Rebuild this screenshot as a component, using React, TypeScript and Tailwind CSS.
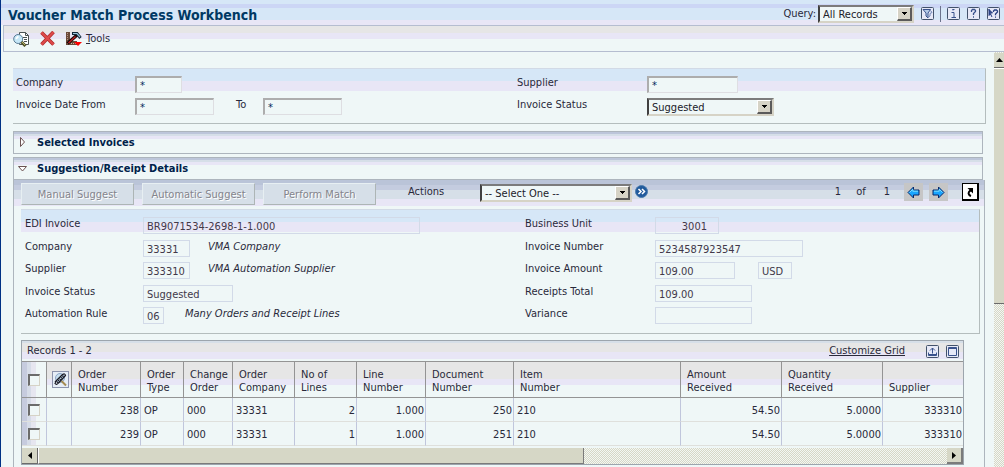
import type { ComponentProps, ReactNode } from 'react';

const selectBase =
  'w-full appearance-none rounded-none border-2 border-t-[#7b7b7b] border-l-[#404040] border-r-[#d6d3c6] border-b-[#d6d3c6] bg-[#eff7f7] pt-px pl-[3px] text-[11px] leading-[14px] text-[#212129]';

function Select({ id, label, options, className }: { id: string; label?: string; options: string[]; className: string }) {
  return (
    <span className={`relative inline-block h-[18px] shrink-0 ${className}`}>
      <select id={id} aria-label={label} className={`${selectBase} block h-[18px]`}>
        {options.map((o) => (
          <option key={o}>{o}</option>
        ))}
      </select>
      <span className="pointer-events-none absolute top-[2px] right-[2px] flex h-[14px] w-[15px] items-center justify-center border-t border-l border-r-2 border-b-2 border-t-white border-l-white border-r-[#5a5a5a] border-b-[#5a5a5a] bg-[#d6d3c6]">
        <svg width="5" height="3" viewBox="0 0 5 3" shapeRendering="crispEdges">
          <path d="M0 0h5v1h-1v1h-1v1h-1v-1h-1v-1h-1z" />
        </svg>
      </span>
    </span>
  );
}

function Field({ className = '', ...rest }: ComponentProps<'input'>) {
  return (
    <input
      className={`h-[17px] min-w-0 rounded-none border border-t-2 border-l-2 border-t-[#adadad] border-l-[#adadad] border-r-[#dedee2] border-b-[#dedee2] bg-[#eff7f7] px-[3px] text-[11px] leading-3 text-[#00295a] ${className}`}
      {...rest}
    />
  );
}

function ReadOnly({ className = '', ...rest }: ComponentProps<'input'>) {
  return (
    <input
      readOnly
      className={`h-[17px] min-w-0 rounded-none border border-[#d2dae8] px-[3px] pt-px text-[11px] leading-3 text-[#42394a] ${className}`}
      {...rest}
    />
  );
}

function Row({ id, label, labelWidth, children }: { id: string; label: string; labelWidth: string; children: ReactNode }) {
  return (
    <div className="flex items-start">
      <label htmlFor={id} className={`shrink-0 leading-[14px] ${labelWidth}`}>
        {label}
      </label>
      {children}
    </div>
  );
}

function Section({ title, open }: { title: string; open?: boolean }) {
  return (
    <button
      type="button"
      aria-expanded={!!open}
      className="mr-[3px] flex h-[23px] items-center border border-[#adb5bd] bg-[linear-gradient(#bdc6da_0_2px,#d6dfe8_2px_4px,#e8e6f6_4px_7px,#eff7f7_7px)] pl-1 text-left text-[11px] font-bold text-[#00214a]"
    >
      <span className="flex w-[19px] justify-start">
        {open ? (
          <svg width="9" height="6" viewBox="0 0 9 6">
            <path d="M.5.5h8l-4 4.500z" fill="#fff" stroke="#6b5252" />
          </svg>
        ) : (
          <svg width="9" height="10" viewBox="0 0 9 10" className="mb-px">
            <path d="M2.500.5v9l4-4.500z" fill="#fff" stroke="#6b5252" />
          </svg>
        )}
      </span>
      <span className="pt-px">{title}</span>
    </button>
  );
}

function HeaderIcon({ label, children }: { label: string; children: ReactNode }) {
  return (
    <button type="button" aria-label={label} className="block size-[13px]">
      <svg width="13" height="13" viewBox="0 0 13 13" fill="none" stroke="#39528c">
        <rect x=".5" y=".5" width="12" height="12" rx="1" fill="#e6e9f7" stroke="#42526b" />
        {children}
      </svg>
    </button>
  );
}

function PagerArrow({ label, flip }: { label: string; flip?: boolean }) {
  return (
    <button type="button" aria-label={label} className="flex h-[18px] w-[19px] items-center justify-center bg-[#c6c6c6]">
      <svg width="13" height="13" viewBox="0 0 13 13" className={flip ? '-scale-x-100' : ''}>
        <path d="M1 6.500 6.500 1v3H12v5H6.500v3z" fill="#18a5ff" stroke="#08296b" />
        <path d="M2.500 6.500 5.800 3.200V5.200H11" fill="none" stroke="#7be0ff" />
      </svg>
    </button>
  );
}

const columns: { title: string[]; width: string; right?: boolean }[] = [
  { title: ['Order', 'Number'], width: 'w-[69px]', right: true },
  { title: ['Order', 'Type'], width: 'w-[43px]' },
  { title: ['Change', 'Order'], width: 'w-[49px]' },
  { title: ['Order', 'Company'], width: 'w-[62px]' },
  { title: ['No of', 'Lines'], width: 'w-[62px]', right: true },
  { title: ['Line', 'Number'], width: 'w-[69px]', right: true },
  { title: ['Document', 'Number'], width: 'w-[88px]', right: true },
  { title: ['Item', 'Number'], width: '' },
  { title: ['Amount', 'Received'], width: 'w-[101px]', right: true },
  { title: ['Quantity', 'Received'], width: 'w-[101px]', right: true },
  { title: ['Supplier'], width: 'w-[80px]', right: true },
];

const rows = [
  ['238', 'OP', '000', '33331', '2', '1.000', '250', '210', '54.50', '5.0000', '333310'],
  ['239', 'OP', '000', '33331', '1', '1.000', '251', '210', '54.50', '5.0000', '333310'],
];

const checkbox =
  'block size-3 appearance-none border-t-2 border-l-2 border-r border-b border-t-[#6b6b6b] border-l-[#6b6b6b] border-r-[#d6d3c6] border-b-[#d6d3c6] bg-[#eff7f7]';
const checkCell = 'pl-[6px] bg-[linear-gradient(90deg,#c6cbde_0_5px,#d6dce8_5px_9px,#e6e6f0_9px_14px,#eff7f7_14px)]!';
const dither = 'bg-[repeating-conic-gradient(#d6d7c6_0_25%,#f3f7f3_0_50%)] bg-[length:2px_2px]';

export default function App() {
  return (
    <div className="flex h-screen min-h-[467px] flex-col overflow-hidden border-l border-[#003184] bg-[#eff7f7] font-['DejaVu_Sans_Condensed','DejaVu_Sans',sans-serif] text-[11px] text-[#29293a]">
      <header className="flex h-[25px] shrink-0 items-center bg-[linear-gradient(#d6e7f7_0_4px,#ccd6f5_4px_8px,#d6e7f7_8px_20px,#e8e6f6_20px)] pr-1 pl-[7px]">
        <h1 className="mt-1 grow text-[14px] leading-4 font-bold text-[#003963]">Voucher Match Process Workbench</h1>
        <label htmlFor="query" className="mt-1 mr-[2px]">
          Query:
        </label>
        <Select id="query" options={['All Records']} className="mt-[2px] w-24" />
        <div className="mt-[2px] ml-[7px] flex items-center gap-[7px]">
          <HeaderIcon label="Filter">
            <path d="M2 2.500h7.500L7 6v5L5 9V6z" fill="#b5cbe8" />
            <path d="M9.500 3.500 11 5.500 9 6.500V9L7.500 10" stroke="#6b84b5" />
          </HeaderIcon>
          <span className="-mx-px h-4 w-px bg-[#6b738c]" />
          <HeaderIcon label="About">
            <path d="M5.500 2.500h2M6 2v1.500M4.500 5.500h2.500V10M4.500 10.500h4.500" />
          </HeaderIcon>
          <HeaderIcon label="Help">
            <path d="M4.500 5V3.500L5.500 2.500h2L8.500 3.500v1L6.500 6.500V8M6 10h1" strokeWidth="1.300" />
          </HeaderIcon>
          <HeaderIcon label="Item help">
            <path d="M2 2v6.500L3.500 7 5 10M2 2.500 5.500 6H3z" fill="#294284" stroke="#294284" />
            <path d="M6.500 5V4l1-1h2l1 1v1L8.500 7v1.200M8 10.200h1" stroke="#294284" strokeWidth="1.300" />
          </HeaderIcon>
        </div>
      </header>

      <nav className="ml-[2px] flex h-[27px] shrink-0 items-center border border-r-0 border-[#b5bdd0] bg-[linear-gradient(#e6e6e6_0_7px,#e8e6f6_7px_13px,#eff7f7_13px)] pl-[9px]">
        <button type="button" aria-label="Find" className="mr-[10px]">
          <svg width="17" height="16" viewBox="0 0 17 16" fill="none">
            <path d="M6.500 1.500h6l3 3v9h-9z" fill="#fff" stroke="#4a5252" />
            <path d="M12.500 1.500v3h3" stroke="#4a5252" />
            <path d="M10 6.500h4M11 8.500h3M11 10.500h3" stroke="#4a5252" />
            <circle cx="5.200" cy="8" r="4.500" fill="#c6e7f7" stroke="#5a7b94" />
            <path d="M3 7.800 5.300 5.300" stroke="#fff" strokeWidth="1.700" />
            <path d="m8.500 11 4 4" stroke="#525229" strokeWidth="3" />
            <path d="m9 11 3 3" stroke="#b5b56b" />
          </svg>
        </button>
        <button type="button" aria-label="Delete" className="mr-[11px]">
          <svg width="15" height="15" viewBox="0 0 15 15" fill="none">
            <path d="M1.500 1.500 13.500 13.500M13.500 1 1.500 13.500" stroke="#ad2929" strokeWidth="3.600" />
            <path d="M1.500 1.500 13.500 13.500M13.500 1 1.500 13.500" stroke="#de4a4a" strokeWidth="2.200" />
          </svg>
        </button>
        <button type="button" className="flex items-center gap-1">
          <svg width="16" height="16" viewBox="0 0 16 16" fill="none">
            <path d="M0 1h4v9h7v4H0z" fill="#6b4a39" />
            <path d="M1.500 2v11" stroke="#b59484" strokeDasharray="1 1" />
            <path d="M3 12.500h8" stroke="#d6b59c" strokeDasharray="1 1" />
            <path d="M1.500 12.500 11 4" stroke="#180808" strokeWidth="3.200" />
            <path d="M2.500 12 9.500 5.500" stroke="#c62121" strokeWidth="1.200" />
            <path d="M6 2.500h5L14.500 7" stroke="#102939" strokeWidth="3" />
            <path d="M7 2.500h4L14 6" stroke="#9cc6de" strokeWidth="1.200" />
            <path d="M8 11h8l-4 4z" fill="#f00" />
          </svg>
          <span className="pt-[2px]">
            <u>T</u>ools
          </span>
        </button>
      </nav>

      <div className="flex min-h-0 grow">
        <main className="flex min-w-0 grow flex-col overflow-hidden pt-4 pr-2 pl-3">
          <section
            aria-label="Filters"
            className="flex h-14 shrink-0 border-t border-r border-b border-[#b4bdbd] border-t-[#d2dae6] bg-[linear-gradient(#d6e7f7_0_12px,#e8e6f6_12px_22px,#eff7f7_22px)] pt-[7px] pl-[3px]"
          >
            <div className="flex w-[501px] flex-col gap-[5px]">
              <Row id="company" label="Company" labelWidth="w-[119px]">
                <Field id="company" defaultValue="*" className="w-[47px]" />
              </Row>
              <Row id="from" label="Invoice Date From" labelWidth="w-[119px]">
                <Field id="from" defaultValue="*" className="w-[79px]" />
                <label htmlFor="to" className="ml-[22px] w-[27px] leading-[14px]">
                  To
                </label>
                <Field id="to" defaultValue="*" className="w-[79px]" />
              </Row>
            </div>
            <div className="flex flex-col gap-[5px]">
              <Row id="supplier" label="Supplier" labelWidth="w-[130px]">
                <Field id="supplier" defaultValue="*" className="w-[91px]" />
              </Row>
              <Row id="status" label="Invoice Status" labelWidth="w-[130px]">
                <Select id="status" options={['Suggested']} className="w-[127px]" />
              </Row>
            </div>
          </section>

          <div className="mt-[7px] flex shrink-0 flex-col gap-[3px]">
            <Section title="Selected Invoices" />
            <Section title="Suggestion/Receipt Details" open />
          </div>

          <section
            aria-label="Suggestion details"
            className="mr-px flex grow flex-col border-r border-l border-[#adb5bd] bg-[linear-gradient(#bac4d8_0_5px,#c4ccdf_5px_10px,#d6dfe8_10px_19px,#e8e6f6_19px_26px,#eff7f7_26px)] pt-[3px] pr-1 pl-[7px]"
          >
            <div className="flex h-[22px] shrink-0 items-start">
              <div className="flex gap-2">
                {['Manual Suggest', 'Automatic Suggest', 'Perform Match'].map((t) => (
                  <button
                    key={t}
                    type="button"
                    disabled
                    className="h-[22px] w-[113px] border border-t-[#e7eff2] border-r-[#adb5b5] border-b-[#adb5b5] border-l-[#e7eff2] bg-[#d6dfe8] pt-[2px] text-[#84848c] [text-shadow:1px_1px_0_#fff]"
                  >
                    {t}
                  </button>
                ))}
              </div>
              <label htmlFor="actions" className="mt-[2px] ml-[32px] w-[72px] leading-[14px]">
                Actions
              </label>
              <Select id="actions" options={['-- Select One --']} className="mt-px w-[152px]" />
              <button type="button" aria-label="Go" className="mt-[2px] ml-[3px]">
                <svg width="13" height="13" viewBox="0 0 13 13" fill="none">
                  <circle cx="6.500" cy="6.500" r="6" fill="#215a9c" stroke="#4a7bad" />
                  <path d="m3.500 4 2.500 2.500L3.500 9M7 4l2.500 2.500L7 9" stroke="#fff" strokeWidth="1.500" />
                </svg>
              </button>
              <div className="mr-px ml-auto flex items-start">
                <span className="mt-[2px] flex gap-[15px] pr-[14px] leading-[14px]">
                  <span>1</span>
                  <span>of</span>
                  <span className="pl-[3px]">1</span>
                </span>
                <div className="mr-[14px] flex gap-[6px]">
                  <PagerArrow label="Previous" />
                  <PagerArrow label="Next" flip />
                </div>
                <button
                  type="button"
                  aria-label="Maximize"
                  className="flex h-[18px] w-[17px] items-center justify-center border border-r-2 border-b-2 border-black bg-white"
                >
                  <svg width="9" height="10" viewBox="0 0 9 10" fill="none">
                    <path d="M1.500 1H7v5.500z" fill="#000" />
                    <path d="M5.500 3Q1.500 5 3 7.500 3.500 8.500 5 9" stroke="#000" strokeWidth="2" />
                  </svg>
                </button>
              </div>
            </div>

            <div className="mt-1 flex h-[125px] shrink-0 border-t border-r border-b border-[#b4bdbd] border-t-[#d2dae6] bg-[linear-gradient(#d6e7f7_0_12px,#e8e6f6_12px_22px,#eff7f7_22px)] pt-[7px] pl-1">
              <div className="grid w-[500px] grid-rows-[23px_22px_23px_22px_17px]">
                <Row id="edi" label="EDI Invoice" labelWidth="w-[118px]">
                  <ReadOnly id="edi" defaultValue="BR9071534-2698-1-1.000" className="w-[277px]" />
                </Row>
                <Row id="co" label="Company" labelWidth="w-[118px]">
                  <ReadOnly id="co" defaultValue="33331" className="w-[47px]" />
                  <i className="ml-[18px] leading-[14px]">VMA Company</i>
                </Row>
                <Row id="sup" label="Supplier" labelWidth="w-[118px]">
                  <ReadOnly id="sup" defaultValue="333310" className="w-[47px]" />
                  <i className="ml-[18px] leading-[14px]">VMA Automation Supplier</i>
                </Row>
                <Row id="st" label="Invoice Status" labelWidth="w-[118px]">
                  <ReadOnly id="st" defaultValue="Suggested" className="w-[90px]" />
                </Row>
                <Row id="rule" label="Automation Rule" labelWidth="w-[118px]">
                  <ReadOnly id="rule" defaultValue="06" className="w-[21px]" />
                  <i className="ml-[21px] leading-[14px]">Many Orders and Receipt Lines</i>
                </Row>
              </div>
              <div className="grid grid-rows-[23px_22px_23px_22px_17px]">
                <Row id="bu" label="Business Unit" labelWidth="w-[130px]">
                  <ReadOnly id="bu" defaultValue="3001" className="w-16 pr-[11px] text-right" />
                </Row>
                <Row id="num" label="Invoice Number" labelWidth="w-[130px]">
                  <ReadOnly id="num" defaultValue="5234587923547" className="w-[148px]" />
                </Row>
                <Row id="amt" label="Invoice Amount" labelWidth="w-[130px]">
                  <ReadOnly id="amt" defaultValue="109.00" className="w-20" />
                  <ReadOnly aria-label="Currency" defaultValue="USD" className="ml-[23px] w-[34px]" />
                </Row>
                <Row id="tot" label="Receipts Total" labelWidth="w-[130px]">
                  <ReadOnly id="tot" defaultValue="109.00" className="w-[97px]" />
                </Row>
                <Row id="var" label="Variance" labelWidth="w-[130px]">
                  <ReadOnly id="var" defaultValue="" className="w-[97px]" />
                </Row>
              </div>
            </div>

            <div className="mt-[6px] mr-[16px] shrink-0 border border-[#9ca5ad]">
              <div className="flex h-5 items-center bg-[linear-gradient(#d6dfe8_0_2px,#e6e6e6_2px_11px,#e8e6f6_11px_18px,#eff7f7_18px)] pr-1 pl-[5px]">
                <span className="grow pt-px">Records 1 - 2</span>
                <a href="#customize" className="mr-[21px] pt-px underline">
                  Customize Grid
                </a>
                <div className="flex gap-[7px]">
                  <HeaderIcon label="Export">
                    <path d="M6.500 8.500V3M4 5.500l2.500-2.500L9 5.500" />
                    <path d="M2.500 7.500v3h8v-3M3 9.500h7" />
                  </HeaderIcon>
                  <HeaderIcon label="Maximize grid">
                    <path d="M2.500 2.500h8v8h-8zM2.500 3.500h8" />
                  </HeaderIcon>
                </div>
              </div>
              <table className="w-full table-fixed border-separate border-spacing-0">
                <thead>
                  <tr className="h-[37px] *:border-t *:border-b *:border-[#949494] *:bg-[linear-gradient(#e6e6e6_0_17px,#e8e6f6_17px_23px,#eff7f7_23px)]">
                    <th className={`w-[25px] border-r ${checkCell}`}>
                      <input type="checkbox" aria-label="Select all" className={checkbox} />
                    </th>
                    <th className="w-[25px] border-r pl-[5px]">
                      <svg width="17" height="17" viewBox="0 0 17 17" fill="none" aria-label="Attachments">
                        <rect x=".5" y=".5" width="16" height="16" fill="#e6eef7" stroke="#8c94ad" />
                        <circle cx="8" cy="7" r="4.500" fill="#c6deef" stroke="#8ca5c6" />
                        <path d="m9.500 10 4.500 4.500" stroke="#a58c52" strokeWidth="2" />
                        <path d="M3 11 10.500 3.500Q13 2 13.500 4.500L6.500 12Q4.500 14.500 3 12.500L4.500 9.500" stroke="#181821" strokeWidth="1.200" />
                        <path d="m5 11.500 7-7.500" stroke="#181821" strokeDasharray="1 1" strokeWidth="2" />
                      </svg>
                    </th>
                    {columns.map((c, i) => (
                      <th
                        key={c.title.join()}
                        className={`${c.width} pb-[3px] pl-[6px] text-left align-bottom leading-[13px] font-normal ${i < columns.length - 1 ? 'border-r' : ''}`}
                      >
                        {c.title.map((t) => (
                          <span key={t} className="block">
                            {t}
                          </span>
                        ))}
                      </th>
                    ))}
                  </tr>
                </thead>
                <tbody>
                  {rows.map((r) => (
                    <tr key={r[0]} className="h-6 *:border-b *:border-b-[#dfe0dc]">
                      <td className={`border-r border-r-[#c0c6dc] ${checkCell}`}>
                        <input type="checkbox" aria-label={`Select order ${r[0]}`} className={checkbox} />
                      </td>
                      <td className="border-r border-r-[#c0c6dc]" />
                      {r.map((v, i) => (
                        <td
                          key={columns[i].title.join()}
                          className={`pt-[2px] leading-4 ${columns[i].right ? 'pr-px text-right' : 'pl-[3px]'} ${i < r.length - 1 ? 'border-r border-r-[#c0c6dc]' : ''}`}
                        >
                          {v}
                        </td>
                      ))}
                    </tr>
                  ))}
                </tbody>
              </table>
              <div className={`mt-[2px] flex h-4 ${dither}`}>
                <span className="flex w-4 items-center justify-center border-r border-b border-[#6b6b6b] bg-[#d6d7c6]">
                  <svg width="4" height="7" viewBox="0 0 4 7">
                    <path d="M4 0v7L0 3.500z" />
                  </svg>
                </span>
                <span className="w-[58%] border-r border-b border-l border-[#7b7b7b] border-l-white bg-[#d6d7c6]" />
                <span className="ml-auto flex w-4 items-center justify-center border-r-2 border-b-2 border-[#7b7b7b] bg-[#d6d7c6]">
                  <svg width="4" height="7" viewBox="0 0 4 7">
                    <path d="M0 0v7l4-3.500z" />
                  </svg>
                </span>
              </div>
            </div>
          </section>
        </main>

        <div className={`flex w-[10px] shrink-0 flex-col pt-px ${dither}`}>
          <span className="flex h-[15px] shrink-0 items-center justify-center border-b border-[#6b6b6b] bg-[#d6d7c6]">
            <svg width="7" height="4" viewBox="0 0 7 4">
              <path d="M0 4h7L3.500 0z" />
            </svg>
          </span>
          <span className="h-[57%] border-t border-b border-t-white border-b-[#6b6b6b] bg-[#d6d7c6]" />
        </div>
      </div>
    </div>
  );
}
